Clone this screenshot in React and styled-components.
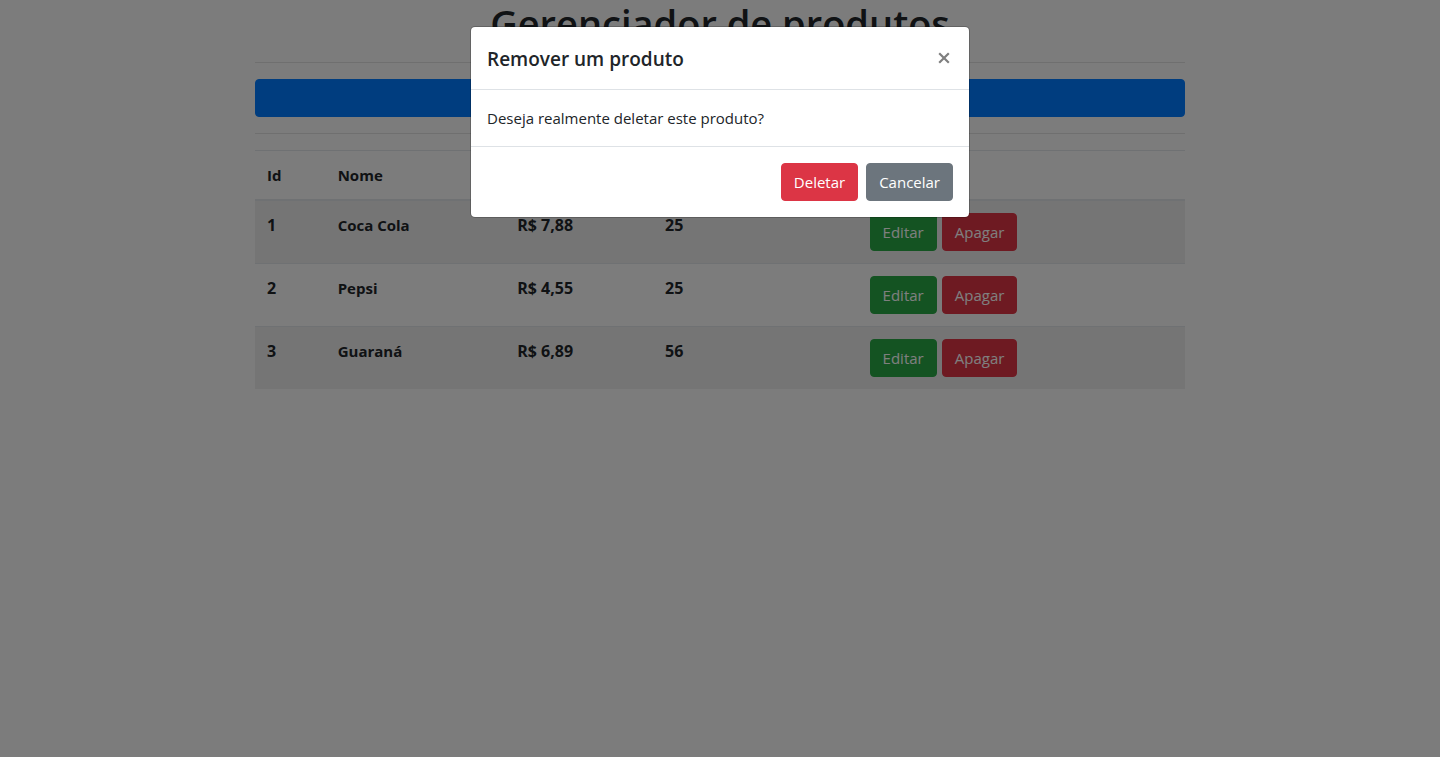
import React from 'react';
import styled, { createGlobalStyle, css } from 'styled-components';

const GlobalStyle = createGlobalStyle`
  *, *::before, *::after { box-sizing: border-box; }
  body {
    margin: 0;
    background: #fff;
    color: #212529;
    font-family: 'Segoe UI', 'Open Sans', 'Noto Sans', sans-serif;
    font-size: 15px;
    line-height: 24px;
  }
`;

const Page = styled.div`
  position: relative;
  min-height: 100vh;
  margin-right: 2px;
  background: #f8f8f8;
`;

const Container = styled.main`
  max-width: 960px;
  margin: 0 auto;
  padding: 0 15px;
`;

const Title = styled.h1`
  margin: 0;
  font-size: 38px;
  font-weight: 600;
  line-height: 46px;
  text-align: center;
`;

const Divider = styled.hr`
  margin: 16px 0;
  border: 0;
  border-top: 1px solid rgba(0, 0, 0, 0.1);
`;

const tones = {
  primary: '#007bff',
  success: '#28a745',
  danger: '#dc3545',
  secondary: '#6c757d',
};

const Button = styled.button`
  height: 38px;
  padding: 0 12px;
  border: 1px solid ${({ $tone }) => tones[$tone]};
  border-radius: 4px;
  background: ${({ $tone }) => tones[$tone]};
  color: #fff;
  font: inherit;
  line-height: 24px;
  cursor: pointer;
  ${({ $block }) => $block && css`
    display: block;
    width: 100%;
  `}
`;

const Table = styled.table`
  width: 100%;
  table-layout: fixed;
  border-collapse: collapse;
`;

const HeadCell = styled.th`
  width: ${({ $width }) => $width};
  padding: 12px;
  border-top: 1px solid #dee2e6;
  border-bottom: 2px solid #dee2e6;
  font-weight: 700;
  text-align: left;
`;

const Row = styled.tr`
  &:nth-of-type(odd) { background: rgba(0, 0, 0, 0.05); }
`;

const Cell = styled.td`
  padding: 12px;
  border-top: 1px solid #dee2e6;
  font-size: ${({ $numeric }) => ($numeric ? '16px' : '15px')};
  font-weight: 700;
  text-align: left;
  vertical-align: top;
`;

const Actions = styled.div`
  display: flex;
  gap: 5px;
  font-weight: 400;
`;

const Backdrop = styled.div`
  position: absolute;
  inset: 0;
  padding: 26px 8px;
  background: rgba(0, 0, 0, 0.5);
`;

const Dialog = styled.section`
  max-width: 500px;
  margin: 0 auto;
  border: 1px solid rgba(0, 0, 0, 0.2);
  border-radius: 5px;
  background: #fff;
  background-clip: padding-box;
`;

const DialogHeader = styled.header`
  display: flex;
  align-items: flex-start;
  justify-content: space-between;
  padding: 16px 16px 14px;
  border-bottom: 1px solid #dee2e6;
`;

const DialogTitle = styled.h2`
  margin: 0;
  font-size: 19px;
  font-weight: 600;
  line-height: 32px;
`;

const CloseButton = styled.button`
  display: flex;
  padding: 9px 3px;
  border: 0;
  background: transparent;
  color: #7f7f7f;
  cursor: pointer;
`;

const DialogBody = styled.p`
  margin: 0;
  padding: 16px;
`;

const DialogFooter = styled.footer`
  display: flex;
  justify-content: flex-end;
  gap: 8px;
  padding: 16px;
  border-top: 1px solid #dee2e6;
`;

const columns = [
  { key: 'id', label: 'Id', width: '7.6%' },
  { key: 'name', label: 'Nome', width: '19.3%' },
  { key: 'price', width: '15.9%' },
  { key: 'quantity', width: '22%' },
  { key: 'actions', width: '35.2%' },
];

const products = [
  { id: 1, name: 'Coca Cola', price: 'R$ 7,88', quantity: 25 },
  { id: 2, name: 'Pepsi', price: 'R$ 4,55', quantity: 25 },
  { id: 3, name: 'Guaraná', price: 'R$ 6,89', quantity: 56 },
];

export default function App() {
  return (
    <>
      <GlobalStyle />
      <Page>
        <Container>
          <Title>Gerenciador de produtos</Title>
          <Divider />
          <Button type="button" $tone="primary" $block aria-label="Adicionar" />
          <Divider />
          <Table>
            <thead>
              <tr>
                {columns.map(({ key, label, width }) => (
                  <HeadCell key={key} scope="col" $width={width}>{label}</HeadCell>
                ))}
              </tr>
            </thead>
            <tbody>
              {products.map(({ id, name, price, quantity }) => (
                <Row key={id}>
                  <Cell as="th" scope="row" $numeric>{id}</Cell>
                  <Cell>{name}</Cell>
                  <Cell $numeric>{price}</Cell>
                  <Cell $numeric>{quantity}</Cell>
                  <Cell>
                    <Actions>
                      <Button type="button" $tone="success">Editar</Button>
                      <Button type="button" $tone="danger">Apagar</Button>
                    </Actions>
                  </Cell>
                </Row>
              ))}
            </tbody>
          </Table>
        </Container>
        <Backdrop>
          <Dialog role="dialog" aria-modal="true" aria-labelledby="dialog-title">
            <DialogHeader>
              <DialogTitle id="dialog-title">Remover um produto</DialogTitle>
              <CloseButton type="button" aria-label="Fechar">
                <svg width="12" height="12" viewBox="0 0 12 12" fill="none" stroke="currentColor" strokeWidth="2.2">
                  <path d="M1.2 1.2 10.8 10.8M10.8 1.2 1.2 10.8" />
                </svg>
              </CloseButton>
            </DialogHeader>
            <DialogBody>Deseja realmente deletar este produto?</DialogBody>
            <DialogFooter>
              <Button type="button" $tone="danger">Deletar</Button>
              <Button type="button" $tone="secondary">Cancelar</Button>
            </DialogFooter>
          </Dialog>
        </Backdrop>
      </Page>
    </>
  );
}
